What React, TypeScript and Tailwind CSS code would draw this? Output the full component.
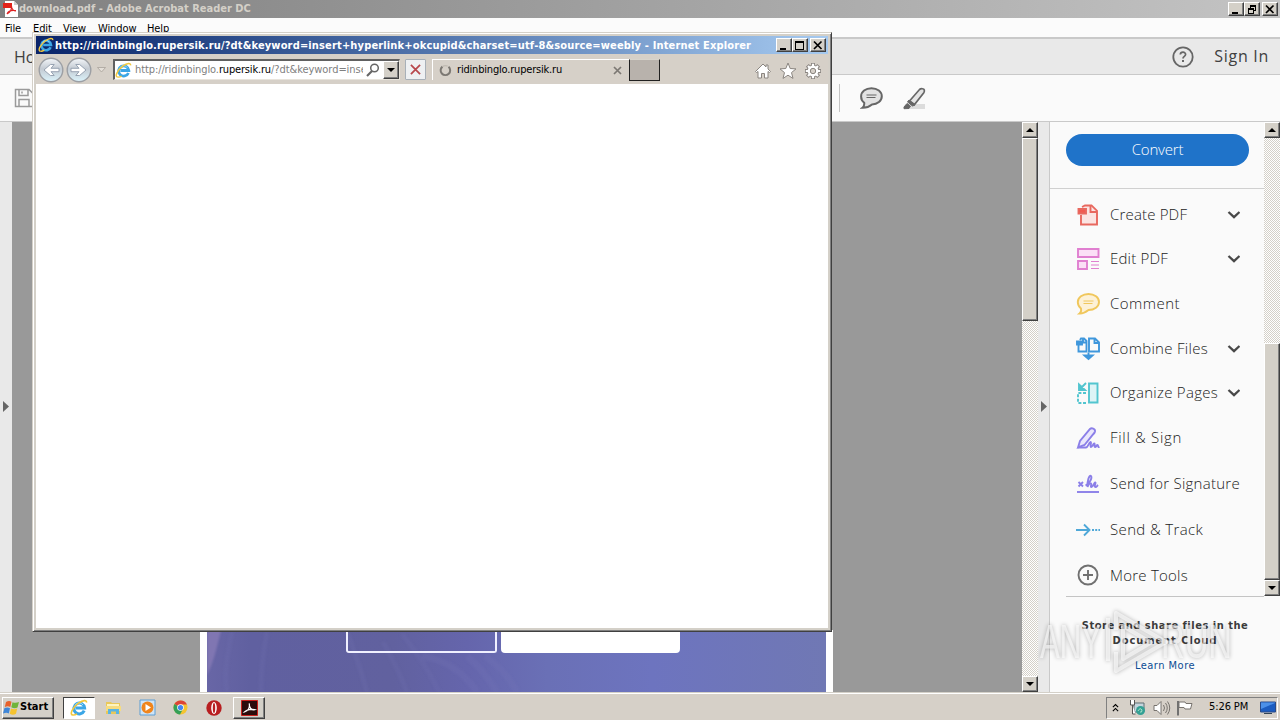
import React from 'react';

const bevel = 'border border-t-white border-l-white border-r-[#404040] border-b-[#404040] bg-[#d4d0c8]';
const tahoma = "font-['DejaVu_Sans_Condensed','DejaVu_Sans',sans-serif]";
const clean = "font-['Open_Sans','Noto_Sans',sans-serif]";
const dither = 'bg-[repeating-conic-gradient(#ffffff_0%_25%,#d4d0c8_0%_50%)] bg-[length:2px_2px]';

function IELogo({ size }: { size: number }) {
  return (
    <svg width={size} height={size} viewBox="0 0 18 18" fill="none" className="shrink-0">
      <path d="M14.2 11.6A5.4 5.4 0 1 1 14.6 9H5.8" stroke="#3ba6e6" strokeWidth="3" />
      <path d="M5 6.5A4.5 4.5 0 0 1 13 6" stroke="#a5def9" strokeWidth="1" />
      <path d="M3 16C-1 16 2.500 8.500 8.500 4.200C13 1 17 .8 16.500 3.600" stroke="#f2c83e" strokeWidth="1.600" />
      <path d="M3 16c1.500.2 3-.5 4-1.200" stroke="#f2c83e" strokeWidth="1.500" />
    </svg>
  );
}

function WinButton({ kind }: { kind: 'min' | 'max' | 'restore' | 'close' }) {
  return (
    <div className={`${bevel} flex h-[14px] w-4 shrink-0 items-center justify-center shadow-[inset_-1px_-1px_0_#808080]`}>
      <svg width="12" height="11" viewBox="0 0 12 11" fill="none" stroke="#000" shapeRendering={kind === 'close' ? 'auto' : 'crispEdges'}>
        {kind === 'min' && <path d="M2 9h6" strokeWidth="2" />}
        {kind === 'max' && <path d="M1.500 1.500h8v8h-8zM1 2.500h9" />}
        {kind === 'restore' && <path d="M4 1h6M4 2h6M4.500 1v3M9.500 1v6M8 6.500h2M2 4.500h6M2 5.500h6M2.500 4v6M7.500 4v6M2 9.500h6" />}
        {kind === 'close' && <path d="M2 1.500l7.500 7.500M9.500 1.500L2 9" strokeWidth="1.700" />}
      </svg>
    </div>
  );
}

function ScrollButton({ up }: { up?: boolean }) {
  return (
    <div className={`${bevel} flex h-4 w-4 shrink-0 items-center justify-center shadow-[inset_-1px_-1px_0_#808080]`}>
      <svg width="8" height="4" viewBox="0 0 8 4"><path d={up ? 'M0 4L4 0L8 4z' : 'M0 0L4 4L8 0z'} fill="#000" /></svg>
    </div>
  );
}

function TitleBar() {
  return (
    <div className="flex h-[18px] shrink-0 items-center bg-linear-to-r from-[#808080] to-[#c4c4c4] px-[2px]">
      <svg width="17" height="16" viewBox="0 0 17 16" className="shrink-0">
        <path d="M3 0h9l4 4v12H3z" fill="#fff" />
        <path d="M12 0v4h4z" fill="#cfcfcf" />
        <path d="M1 2h9v5H1z" fill="#e2231a" />
        <path d="M5 13c3-1 5-5 4.500-8M5 13c1-3 5-4 9-3.500M9.500 5c0 3 2 5 4.500 5" stroke="#d22" strokeWidth="1.100" fill="none" />
      </svg>
      <span className={`${tahoma} text-[11px] leading-[16px] font-bold whitespace-nowrap text-[#d4d0c8]`}>download.pdf - Adobe Acrobat Reader DC</span>
      <div className="ml-auto flex"><WinButton kind="min" /><WinButton kind="restore" /><div className="w-[2px]" /><WinButton kind="close" /></div>
    </div>
  );
}

function MenuBar() {
  return (
    <div className={`${tahoma} flex h-[19px] shrink-0 items-center bg-[#fbfbfb] pt-[2px] text-[11px] leading-[17px] tracking-[-0.1px] text-black`}>
      <span className="ml-[5px] w-7">File</span>
      <span className="w-[30px]">Edit</span>
      <span className="w-[35px]">View</span>
      <span className="w-[49px]">Window</span>
      <span>Help</span>
    </div>
  );
}

function HomeBar() {
  return (
    <div className={`${clean} flex h-[38px] shrink-0 items-center border-y border-t-2 border-[#c9c9c9] bg-[#e9e9e9] text-[#404040]`}>
      <span className="ml-[14px] text-[16px]">Home</span>
      <svg className="ml-auto" width="22" height="22" viewBox="0 0 22 22" fill="none" stroke="#666">
        <circle cx="11" cy="11" r="9.700" strokeWidth="1.800" />
        <path d="M8.300 8.500c.2-3.200 5.400-3 5.300 0c-.1 2-2.600 1.800-2.600 4" strokeWidth="1.700" />
        <path d="M11 14v2" strokeWidth="2" />
      </svg>
      <span className="mr-[11px] ml-5 pb-px text-[16px] tracking-[0.7px]">Sign In</span>
    </div>
  );
}

function ToolBar() {
  return (
    <div className="flex h-[47px] shrink-0 items-center border-b border-[#c9c9c9] bg-[#fafafa]">
      <svg className="ml-[14px]" width="20" height="20" viewBox="0 0 20 20" fill="none" stroke="#9a9a9a" strokeWidth="1.500">
        <path d="M1.500 1.500h13.500l4 4v13h-17.500zM5 1.500v6h9v-6M5 18v-6.500h10V18M8 3.500v2" />
      </svg>
      <div className="ml-[805px] h-7 w-px bg-[#c4c4c4]" />
      <svg className="ml-5" width="23" height="22" viewBox="0 0 23 22" fill="#e2e2e2" stroke="#666" strokeWidth="2">
        <path d="M11.500 1.200C17.500 1.200 21.800 4.700 21.800 9.300S17.500 17.400 12 17.400C9.500 19.500 6 20.800 2.500 20.700C4.200 19.500 4.500 18 4.200 15.700C2.300 14.200 1.100 12 1.100 9.400C1.100 4.700 5.500 1.200 11.500 1.200z" />
        <path d="M6.500 8h10M6.500 10.500h9" strokeWidth="1.100" />
      </svg>
      <svg className="ml-5" width="24" height="23" viewBox="0 0 24 23">
        <path d="M9 17h13v5H6z" fill="#dcdcdc" />
        <path d="M6.500 14L16.500 2.500c1.500-1.200 4.500-1 4.800.5c.2 1 0 2-.5 2.800L11.500 17.500z" fill="#e4e4e4" stroke="#666" strokeWidth="1.700" />
        <path d="M6 13l6 5l-2.500 1l-5-4zM1 20l3-3.500l3.500 2.500l-1.500 2.500l-5 .2z" fill="#666" stroke="#666" />
      </svg>
    </div>
  );
}

const tools: { name: string; h: string; t: string; chevron?: boolean; icon: React.ReactNode }[] = [
  {
    name: 'Create PDF', h: 'h-[45px]', t: 'tracking-[0.17px]', chevron: true,
    icon: <g stroke="#e8685f" strokeWidth="1.900" fill="#fbe4e2"><path d="M5 12v9.500h16V8l-5.500-5.500H9L6 4" /><path d="M14.500 3v6H21" /><path d="M2.500 6h7.500v4.500H2.500z" fill="#f05a50" /></g>,
  },
  {
    name: 'Edit PDF', h: 'h-[43px]', t: 'tracking-[0.2px]', chevron: true,
    icon: <g stroke="#e07fd0" strokeWidth="1.900" fill="#fbdff6"><path d="M2 2h20.500v8H2zM2 14h9v8H2z" /><path d="M15 14.500h8M15 18h8M15 21.500h8" strokeWidth="1.100" /></g>,
  },
  {
    name: 'Comment', h: 'h-[47px]', t: 'tracking-[0.47px]',
    icon: <g stroke="#f0c75c" strokeWidth="1.900" fill="#fdf1d6"><path d="M12.500 2C18.500 2 23 5.500 23 10s-4.500 8-10.500 8C10 20 7 21.800 3.500 21.600C5 20.500 5.500 19 5 16.500C3 15 1.800 13 1.800 10C1.800 5.500 6.500 2 12.500 2z" /><path d="M7.500 9h10M7.500 11.500h9" strokeWidth="1" /></g>,
  },
  {
    name: 'Combine Files', h: 'h-[43px]', t: 'tracking-[0.29px]', chevron: true,
    icon: <g stroke="#3f97dc" strokeWidth="1.900" fill="none"><path d="M2.500 8v6.500h8V4L8 1.500H5L4 3M13 14.500V1.500h6l4 4v9zM18.500 1.500V6H23M7 1.500v4h4" /><path d="M1 4.500h5v3H1z" fill="#3f97dc" /><path d="M12.500 15.500v6M8.500 18.500l4 3.500l4-3.500z" fill="#3f97dc" /></g>,
  },
  {
    name: 'Organize Pages', h: 'h-[45px]', t: 'tracking-[0.28px]', chevron: true,
    icon: <g stroke="#52c5cf" strokeWidth="1.900" fill="none"><path d="M13 2.500h8.500v19H13z" fill="#ddf4f6" /><path d="M10 12H2v10h8" strokeDasharray="3 1.600" /><path d="M10 2L4 8M3 3.500V9h6z" fill="#52c5cf" /></g>,
  },
  {
    name: 'Fill & Sign', h: 'h-[45px]', t: 'tracking-[0.69px]',
    icon: <g stroke="#8b7fe8" strokeWidth="1.900" fill="none"><path d="M2 21.500L4 15L14 3c1.500-1.500 5.500-.5 5 2.500c-.2 1-1 2-2 3L8.500 19z" fill="#eae7fc" /><path d="M2 21.500h8c2 0 2.500-4.500 4.500-5.500c1.500 0-1 4.500.5 5c1.500 0 2-3.500 3.200-3.500s-.5 3.500.8 3.500s1.500-2 2.500-2s0 2.500 2 2" /></g>,
  },
  {
    name: 'Send for Signature', h: 'h-[47px]', t: 'tracking-[0.26px]',
    icon: <g stroke="#8b7fe8" strokeWidth="1.900" fill="none"><path d="M1 20h22" /><path d="M2.500 10l4.500 4.500M7 10l-4.500 4.500" /><path d="M9.500 13.500c4-2 7-7.500 5.500-9.500c-2-1.500-4 6-3.500 11c1-3 2.500-4.500 3.500-3.500s-1 3.500.5 3.500s2.500-4 3.700-4.500s-1.500 4.500.3 4.500c1 0 1.500-1 2.500-2" /></g>,
  },
  {
    name: 'Send & Track', h: 'h-[45px]', t: 'tracking-[0.36px]',
    icon: <g stroke="#4fa8d8" strokeWidth="1.900" fill="none"><path d="M0 12h13M8 6.500l5.500 5.500L8 17.500" /><path d="M16 12h8" strokeDasharray="2 1.200" /></g>,
  },
  {
    name: 'More Tools', h: 'h-[44px] pt-[2px]', t: 'tracking-[0.24px]',
    icon: <g stroke="#707070" strokeWidth="1.900" fill="none"><circle cx="12" cy="12" r="9.500" /><path d="M12 7v10M7 12h10" /></g>,
  },
];

function ToolsPanel() {
  return (
    <div className={`${clean} flex w-[231px] shrink-0 flex-col border-l border-[#c9c9c9] bg-[#fafafa]`}>
      <div className="flex h-[475px]">
        <div className="flex min-w-0 flex-1 flex-col">
          <div className="flex h-[67px] shrink-0 items-start border-b border-[#d0d0d0] pt-3 pl-4">
            <div className="flex h-8 w-[183px] items-center justify-center rounded-full bg-[#1f73c9] pb-[2px] text-[15px] font-light tracking-[-0.2px] text-white">Convert</div>
          </div>
          <div className="pt-[3px]">
            {tools.map((t) => (
              <div key={t.name} className={`${t.h} flex items-center pl-[26px]`}>
                <svg width="24" height="24" viewBox="0 0 24 24" className="mr-[10px] shrink-0 overflow-visible">{t.icon}</svg>
                <span className={`${t.t} text-[15px] font-light whitespace-nowrap text-[#222]`}>{t.name}</span>
                {t.chevron && (
                  <svg className="mr-[24px] ml-auto shrink-0" width="13" height="8" viewBox="0 0 13 8" fill="none" stroke="#484848" strokeWidth="2.300"><path d="M1.500 1l5.500 5.200L12.500 1" /></svg>
                )}
              </div>
            ))}
          </div>
          <div className="ml-4 h-px shrink-0 bg-[#c4c4c4]" />
        </div>
        <div className={`${dither} flex h-[474px] w-4 flex-col`}>
          <ScrollButton up />
          <div className={`${bevel} mt-auto h-[237px] shadow-[inset_-1px_-1px_0_#808080]`} />
          <ScrollButton />
        </div>
      </div>
      <div className={`${tahoma} flex flex-col items-center pt-[21px] text-[11px] leading-[15px]`}>
        <span className="font-bold tracking-[0.51px] text-[#3c3c3c]">Store and share files in the</span>
        <span className="font-bold tracking-[0.95px] text-[#3c3c3c]">Document Cloud</span>
        <span className="mt-[10px] tracking-[0.48px] text-[#0d4c94]">Learn More</span>
      </div>
    </div>
  );
}

function Page() {
  return (
    <div className="mt-auto ml-[188px] flex h-[62px] w-[633px] shrink-0 bg-white px-[7px]">
      <div className="relative flex flex-1 overflow-hidden bg-[linear-gradient(90deg,#6866a6_0%,#6060a0_7%,#61619f_30%,#6565ac_42%,#6a70b6_55%,#6d74bf_72%,#7078b4_100%)]">
        <svg className="absolute inset-0 blur-[1px]" width="620" height="62" viewBox="0 8 620 62" fill="none">
          <path d="M-4 0h20C10 25 6 45 -4 60z" fill="#8076b2" />
          <path d="M60 10Q54 40 54 70M140 10Q150 35 160 70M176 20Q188 40 200 70M195 12Q218 40 232 70M25 10Q16 50 20 70" stroke="#7472b2" strokeWidth="5" opacity=".22" />
          <path d="M260 34Q278 50 290 70M278 34Q300 50 310 70M215 34Q250 40 270 70" stroke="#7a78b8" strokeWidth="7" opacity=".2" />
        </svg>
        <div className="relative ml-[139px] h-[23px] w-[151px] rounded-b-[3px] border-2 border-t-0 border-[#f0f0ff]" />
        <div className="relative ml-1 h-[23px] w-[179px] rounded-b-[4px] bg-white" />
      </div>
    </div>
  );
}

function Workspace() {
  return (
    <div className="flex min-h-0 flex-1">
      <div className="flex w-3 shrink-0 items-center bg-[#e9e9e9] pl-[2px]"><svg width="8" height="12" viewBox="0 0 8 12"><path d="M1 0l6 5.500l-6 5.500z" fill="#666" /></svg></div>
      <div className="flex w-[1010px] shrink-0 flex-col bg-[#999]"><Page /></div>
      <div className={`${dither} flex w-4 shrink-0 flex-col`}>
        <ScrollButton up />
        <div className={`${bevel} h-[183px] shadow-[inset_-1px_-1px_0_#808080]`} />
        <div className="mt-auto"><ScrollButton /></div>
      </div>
      <div className="flex w-[11px] shrink-0 items-center bg-[#e9e9e9] pl-[2px]"><svg width="8" height="12" viewBox="0 0 8 12"><path d="M1 0l6 5.500l-6 5.500z" fill="#666" /></svg></div>
      <ToolsPanel />
    </div>
  );
}

function NavArrow({ forward }: { forward?: boolean }) {
  return (
    <svg width="26" height="26" viewBox="0 0 26 26" className="shrink-0">
      <defs><linearGradient id="nav" x1="0" y1="0" x2="0" y2="1"><stop offset="0" stopColor="#f4f7fa" /><stop offset=".45" stopColor="#c3cad2" /><stop offset="1" stopColor="#dcf4fc" /></linearGradient></defs>
      <circle cx="13" cy="13" r="11.800" fill="url(#nav)" stroke="#9c9fa4" strokeWidth="1.400" />
      <path d="M21 11.300h-8l3.200-3.800h-3.800l-6.400 5.500l6.400 5.500h3.800l-3.200-3.800H21z" fill="#fff" stroke="#8e9bab" strokeWidth=".9" transform={forward ? 'matrix(-1 0 0 1 26 0)' : undefined} />
    </svg>
  );
}

function ExplorerWindow() {
  return (
    <div className="absolute top-8 left-8 flex h-[600px] w-[800px] flex-col border border-t-[#d4d0c8] border-r-[#404040] border-b-[#404040] border-l-[#d4d0c8] bg-[#d4d0c8] p-[3px] shadow-[inset_1px_1px_0_#fff,inset_-1px_-1px_0_#808080]">
      <div className="flex h-[18px] shrink-0 items-center bg-linear-to-r from-[#0a246a] to-[#a6caf0] px-[2px]">
        <IELogo size={16} />
        <span className={`${tahoma} ml-[1px] pt-px text-[11px] leading-[17px] font-bold tracking-[0.153px] whitespace-nowrap text-white`}>http://ridinbinglo.rupersik.ru/?dt&amp;keyword=insert+hyperlink+okcupid&amp;charset=utf-8&amp;source=weebly - Internet Explorer</span>
        <div className="ml-auto flex"><WinButton kind="min" /><WinButton kind="max" /><div className="w-[2px]" /><WinButton kind="close" /></div>
      </div>
      <div className={`${tahoma} flex h-[30px] shrink-0 items-center bg-[#d6d0c8] pt-px pl-[2px] text-[11px]`}>
        <NavArrow />
        <div className="w-[2px]" />
        <NavArrow forward />
        <svg className="ml-[5px] shrink-0" width="9" height="6" viewBox="0 0 9 6"><path d="M.5.500h8l-4 4.500z" fill="#e4dfd8" stroke="#a8a29a" strokeWidth=".8" /></svg>
        <div className="ml-[7px] flex h-[21px] w-[287px] shrink-0 items-center border border-t-2 border-l-2 border-t-[#606060] border-r-[#e8e4dc] border-b-[#e8e4dc] border-l-[#606060] bg-white">
          <IELogo size={17} />
          <div className="ml-[3px] w-[228px] overflow-hidden whitespace-nowrap text-[#808080]"><span className="tracking-[-0.1px]">http://ridinbinglo.</span><span className="tracking-[-0.17px] text-black">rupersik.ru</span><span className="tracking-[-0.05px]">/?dt&amp;keyword=inse</span></div>
          <svg className="ml-[3px] shrink-0" width="14" height="14" viewBox="0 0 14 14" fill="none" stroke="#666"><circle cx="8.500" cy="5" r="3.800" strokeWidth="1.500" /><path d="M6 8L1 13" strokeWidth="2.200" /></svg>
          <div className={`${bevel} ml-auto flex h-[18px] w-4 items-center justify-center shadow-[inset_-1px_-1px_0_#808080]`}><svg width="8" height="4" viewBox="0 0 8 4"><path d="M0 0h8L4 4z" /></svg></div>
        </div>
        <div className="ml-[5px] flex h-[21px] w-[21px] shrink-0 items-center justify-center rounded-[1px] border border-[#a8b0b8] bg-[#eef0f2]">
          <svg width="11" height="11" viewBox="0 0 12 12" stroke="#b8474c" strokeWidth="1.900"><path d="M1 1l10 10M11 1L1 11" /></svg>
        </div>
        <div className="ml-[6px] flex h-[21px] w-[197px] shrink-0 items-center border-t border-l border-white pl-[6px]">
          <svg width="13" height="13" viewBox="0 0 15 15" fill="none"><path d="M4 3A5.500 5.500 0 1 0 11 3.200" stroke="#7c7873" strokeWidth="2.300" /><path d="M4 3Q7 1 10 2.500" stroke="#c0bab2" strokeWidth="1.500" /></svg>
          <span className="ml-[5px] tracking-[-0.19px] text-black">ridinbinglo.rupersik.ru</span>
          <svg className="mr-[7px] ml-auto" width="9" height="9" viewBox="0 0 9 9" stroke="#7c7873" strokeWidth="1.700"><path d="M1 1l7 7M8 1L1 8" /></svg>
        </div>
        <div className="h-[22px] w-[31px] shrink-0 border border-[#202020] border-t-[#d8d4cc] bg-[#b8b2ac]" />
        <div className="mt-[2px] mr-[6px] ml-auto flex gap-[7px]">
          <svg width="18" height="18" viewBox="0 0 18 18" fill="#fff" stroke="#8a8580"><path d="M9 2L1.500 9.500l1 1L4 9.500V16h3.500v-4.500h3V16H14V9.500l1.500 1l1-1L14 7V3h-2v2z" /></svg>
          <svg width="18" height="18" viewBox="0 0 18 18" fill="#fff" stroke="#8a8580"><path d="M9 1l2.200 5.500l5.800.4l-4.500 3.700l1.500 5.800L9 13.200l-5 3.200l1.500-5.800L1 6.900l5.800-.4z" /></svg>
          <svg width="18" height="18" viewBox="0 0 18 18" fill="none">
            <g stroke="#8a8580" strokeWidth="4"><path d="M9 1v16M1 9h16M3.300 3.300l11.400 11.400M14.700 3.300L3.300 14.700" /></g>
            <circle cx="9" cy="9" r="6.200" fill="#8a8580" />
            <g stroke="#fff" strokeWidth="2.200"><path d="M9 1.800v14.400M1.800 9h14.400M4 4l10 10M14 4L4 14" /></g>
            <circle cx="9" cy="9" r="5.400" fill="#fff" />
            <circle cx="9" cy="9" r="2.700" fill="#d6d0c8" stroke="#8a8580" />
          </svg>
        </div>
      </div>
      <div className="min-h-0 flex-1 bg-white" />
    </div>
  );
}

function Taskbar() {
  return (
    <div className={`${tahoma} flex h-7 shrink-0 items-center border-t border-[#d4d0c8] bg-[#d6d0c8] text-[11px] text-black shadow-[inset_0_1px_0_#fff]`}>
      <div className={`${bevel} mt-[2px] ml-[2px] flex h-[22px] w-[52px] items-center shadow-[inset_-1px_-1px_0_#808080]`}>
        <svg width="17" height="16" viewBox="0 0 17 16" className="shrink-0"><path d="M3 2Q6 0 8.500 1.800L7.300 7Q5 5.500 1.800 7z" fill="#e8622c" /><path d="M9.500 2.200Q12.500 3.500 16 2L14.500 7.500Q11.500 9 8.300 7.300z" fill="#6fb43a" /><path d="M1.500 8Q4.500 6.800 7 8.200L5.800 13.500Q3.500 12 0 13.500z" fill="#3f86d8" /><path d="M8 8.500Q11 10 14.200 8.600L13 13.800Q10 15.500 6.800 13.800z" fill="#f5c32e" /></svg>
        <span className="font-bold">Start</span>
      </div>
      <div className="mt-[2px] ml-[9px] flex h-[22px] w-8 items-center justify-center border border-t-[#404040] border-r-white border-b-white border-l-[#404040] bg-white"><IELogo size={18} /></div>
      <svg className="mt-[2px] ml-[10px]" width="17" height="17" viewBox="0 0 17 17"><path d="M1 3h5l1 1h8v11H1z" fill="#e9c85a" /><path d="M2 5h12v3H2z" fill="#fdf3c0" /><path d="M1 7h15v5H1z" fill="#f6dc80" /><path d="M3 15v-5h11v5h-3v-2.500H6V15z" fill="#58b4e4" /></svg>
      <svg className="mt-[2px] ml-[17px]" width="17" height="17" viewBox="0 0 17 17"><path d="M1 1h15v15H1z" fill="#cfe4f6" stroke="#5c9ed4" /><circle cx="8.500" cy="8.500" r="6" fill="#f0851c" /><path d="M6.500 5l5.500 3.500L6.500 12z" fill="#fff" /></svg>
      <svg className="mt-[2px] ml-[17px]" width="15" height="15" viewBox="0 0 15 15"><circle cx="7.500" cy="7.500" r="7" fill="#f4c430" /><path d="M7.500 7.500L1.400 4A7 7 0 0 1 13.900 4.500H7.500z" fill="#dc4437" /><path d="M1.400 4A7 7 0 0 0 7 14.500L10 9z" fill="#35a058" /><circle cx="7.500" cy="7.500" r="3.300" fill="#fff" /><circle cx="7.500" cy="7.500" r="2.600" fill="#4486f0" /></svg>
      <svg className="mt-[2px] ml-[18px]" width="16" height="16" viewBox="0 0 16 16"><circle cx="8" cy="8" r="7.700" fill="#b81e20" /><ellipse cx="8" cy="8" rx="2.800" ry="6" fill="#fff" /><ellipse cx="8" cy="8" rx="1.200" ry="5" fill="#b81e20" /></svg>
      <div className={`${bevel} mt-[2px] ml-[11px] flex h-[22px] w-8 items-center justify-center shadow-[inset_-1px_-1px_0_#808080]`}>
        <svg width="17" height="16" viewBox="0 0 17 16"><path d="M.5.500h16v15H.500z" fill="#2b0c0c" stroke="#c8201c" /><path d="M3.500 12c4-1 5.500-5 4.700-8.500c0 5 2.500 7 5.500 6.200c-3-.8-8 0-10.200 2.300z" fill="none" stroke="#fff" strokeWidth="1.200" /></svg>
      </div>
      <div className="mt-[2px] mr-[2px] ml-auto flex h-[22px] w-[172px] items-center border border-t-[#808080] border-r-white border-b-white border-l-[#808080] pl-[5px]">
        <svg width="7" height="10" viewBox="0 0 8 10" fill="none" stroke="#000" strokeWidth="1.300"><path d="M1 4l3-3l3 3M1 8.500l3-3l3 3" /></svg>
        <svg className="ml-[10px]" width="17" height="17" viewBox="0 0 17 17"><path d="M5 4h10v9H5z" fill="#c4d4dc" stroke="#5e6e74" /><path d="M1.500 1v5h4V1M3.500 6v9h3" fill="#fff" stroke="#555" /><circle cx="11.500" cy="11.500" r="4.500" fill="#34a094" /><path d="M9 12q2-4 4-1q0 3-2 2" stroke="#a6e2c8" fill="none" /></svg>
        <svg className="ml-[7px]" width="18" height="16" viewBox="0 0 18 16" fill="none" stroke="#77736e"><path d="M1 5.500h3L8 1.500v13l-4-4H1z" fill="#fff" /><path d="M10.500 5q2 3 0 6M12.500 3q3.500 5 0 10M14.500 1.500q4.500 6.500 0 13" /></svg>
        <svg className="ml-[5px]" width="17" height="16" viewBox="0 0 17 16"><path d="M2 15.500V1" stroke="#666" strokeWidth="1.800" /><path d="M3 2h6l1 1.500h6L14.500 9H9L8 7.500H3z" fill="#fff" stroke="#77736e" /></svg>
        <span className="ml-4 tracking-[-0.1px] whitespace-nowrap">5:26 PM</span>
        <svg className="mr-[1px] ml-auto" width="16" height="14" viewBox="0 0 16 14"><path d="M.5 1h15v10H.500z" fill="#1c5cc0" stroke="#2a4a88" /><path d="M1 8L15 2V1.500H1z" fill="#4c90e8" /><path d="M4 12.500h8" stroke="#345" /></svg>
      </div>
    </div>
  );
}

function Watermark() {
  return (
    <svg className="pointer-events-none absolute top-[604px] left-[1034px] drop-shadow-[0_0_2px_rgba(0,0,0,0.45)]" width="206" height="76" viewBox="0 0 206 76">
      <g fill="#fff" fillOpacity=".6" fontFamily="Liberation Sans, sans-serif" fontSize="49">
        <text x="6" y="54" textLength="61" lengthAdjust="spacingAndGlyphs">ANY</text>
        <text x="127" y="54" textLength="71" lengthAdjust="spacingAndGlyphs">RUN</text>
      </g>
      <g fill="none" stroke="#fff" strokeOpacity=".6" strokeLinejoin="round">
        <path d="M82 26V9l50 29L82 67V48" strokeWidth="4" />
        <path d="M89 22v33l28-16.500z" strokeWidth="4" />
        <path d="M74 14v43" strokeWidth="4" />
      </g>
    </svg>
  );
}

export default function App() {
  return (
    <div className="relative flex h-[720px] w-[1280px] flex-col overflow-hidden">
      <TitleBar />
      <MenuBar />
      <HomeBar />
      <ToolBar />
      <Workspace />
      <Taskbar />
      <ExplorerWindow />
      <Watermark />
    </div>
  );
}
